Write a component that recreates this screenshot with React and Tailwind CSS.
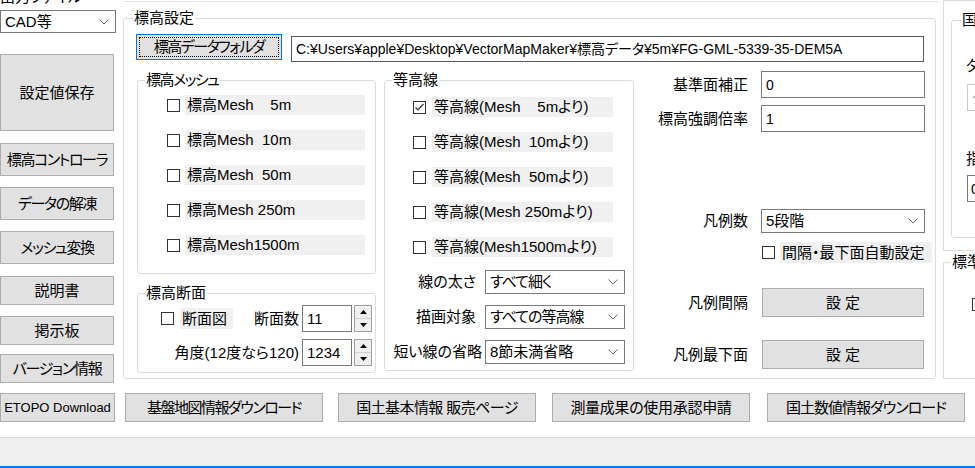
import React from "react";

const Chevron = () => (
  <svg width="10" height="6" viewBox="0 0 10 6" className="shrink-0">
    <polyline points="0.5,0.5 5,5 9.5,0.5" fill="none" stroke="#6d6d6d" strokeWidth="1" />
  </svg>
);

function Btn({ className = "", children }) {
  return (
    <div className={"flex shrink-0 items-center justify-center whitespace-nowrap border border-[#adadad] bg-[#e1e1e1] leading-[20px] " + className}>
      {children}
    </div>
  );
}

function Box({ checked }) {
  return (
    <div className="flex h-[13px] w-[13px] shrink-0 items-center justify-center border border-[#333333] bg-white">
      {checked && (
        <svg width="11" height="11" viewBox="0 0 11 11">
          <polyline points="1.5,5.5 4,8 9.5,2" fill="none" stroke="#333333" strokeWidth="1.2" />
        </svg>
      )}
    </div>
  );
}

function Combo({ className = "", value, valueClass = "" }) {
  return (
    <div className={"flex shrink-0 items-center border border-[#7a7a7a] bg-white pl-[4px] pr-[6px] leading-[20px] " + className}>
      <span className={"flex-1 whitespace-nowrap " + valueClass}>{value}</span>
      <Chevron />
    </div>
  );
}

function Input({ className = "", value }) {
  return (
    <div className={"flex shrink-0 items-center border border-[#7a7a7a] bg-white pl-[4px] leading-[20px] " + className}>
      <span className="whitespace-nowrap">{value}</span>
    </div>
  );
}

function Group({ title, className = "", titleClass = "left-[7px]", children }) {
  return (
    <div className={"relative shrink-0 rounded-[3px] border border-[#dcdcdc] " + className}>
      <span className={"absolute top-[-11px] whitespace-nowrap bg-white px-[1px] leading-[20px] " + titleClass}>{title}</span>
      {children}
    </div>
  );
}

function CheckRow({ checked = false, label, labelClass = "" }) {
  return (
    <div className="flex items-center">
      <Box checked={checked} />
      <div className={"whitespace-pre bg-[#f0f0f0] pl-[2px] leading-[20px] " + labelClass}>{label}</div>
    </div>
  );
}

function Spin() {
  return (
    <div className="ml-[2px] flex h-[27px] w-[18px] shrink-0 flex-col border border-[#a0a0a0] bg-[#f0f0f0]">
      <div className="flex flex-1 items-center justify-center border-b border-[#d0d0d0]">
        <svg width="7" height="4" viewBox="0 0 7 4"><polygon points="0,4 3.5,0 7,4" fill="#000" /></svg>
      </div>
      <div className="flex flex-1 items-center justify-center">
        <svg width="7" height="4" viewBox="0 0 7 4"><polygon points="0,0 3.5,4 7,0" fill="#000" /></svg>
      </div>
    </div>
  );
}

export default function App() {
  return (
    <div className="flex h-[468px] w-[975px] flex-col overflow-hidden bg-white text-[15px] text-black font-['Liberation_Sans','Noto_Sans_CJK_JP',sans-serif] [font-feature-settings:'palt']">
      <div className="flex h-[383px] shrink-0">
        {/* left column */}
        <div className="flex w-[123px] shrink-0 flex-col">
          <div className="flex h-[11px] flex-col justify-end overflow-hidden">
            <div className="mb-[3px] whitespace-nowrap leading-[20px]">出力ファイル</div>
          </div>
          <Combo className="h-[23px] w-[116px]" value="CAD等" />
          <Btn className="mt-[21px] h-[77px] w-[114px]">設定値保存</Btn>
          <Btn className="mt-[12px] h-[33px] w-[114px] tracking-[-1.4px]">標高コントローラ</Btn>
          <Btn className="mt-[11px] h-[33px] w-[114px] tracking-[-1.4px]">データの解凍</Btn>
          <Btn className="mt-[11px] h-[33px] w-[114px] tracking-[-1.4px]">メッシュ変換</Btn>
          <Btn className="mt-[12px] h-[29px] w-[114px]">説明書</Btn>
          <Btn className="mt-[11px] h-[29px] w-[114px]">掲示板</Btn>
          <Btn className="mt-[9px] h-[29px] w-[114px] tracking-[-1.3px]">バージョン情報</Btn>
        </div>

        {/* main */}
        <div className="flex w-[820px] shrink-0 flex-col">
          <div className="h-[2px] w-[815px] border-b border-[#e3e3e3]" />
          <Group title="標高設定" titleClass="left-[9px]" className="mt-[16px] h-[361px] w-[813px] pl-[12px] pt-[15px]">
            <div className="flex items-start">
              <div className="flex h-[26px] w-[146px] shrink-0 border border-[#0078d7] bg-[#e1e1e1]">
                <div className="m-[2px] flex flex-1 items-center justify-center whitespace-nowrap border border-dotted border-black leading-[20px] tracking-[-1.5px]">
                  標高データフォルダ
                </div>
              </div>
              <div className="ml-[9px] mt-[2px] flex h-[26px] w-[633px] shrink-0 items-center border border-[#5a5a5a] bg-white pl-[4px] text-[14px] leading-[20px]">
                <span className="whitespace-nowrap">C:¥Users¥apple¥Desktop¥VectorMapMaker¥標高データ¥5m¥FG-GML-5339-35-DEM5A</span>
              </div>
            </div>

            <div className="mt-[9px] flex items-start">
              {/* col1 */}
              <div className="ml-[1px] mt-[9px] flex shrink-0 flex-col">
                <Group title={<span className="tracking-[-1.5px]">標高メッシュ</span>} className="h-[194px] w-[239px] pl-[29px] pt-[14px]">
                  <div className="flex flex-col gap-[15px]">
                    <CheckRow label="標高Mesh    5m" labelClass="ml-[5px] h-[20px] w-[180px]" />
                    <CheckRow label="標高Mesh  10m" labelClass="ml-[5px] h-[20px] w-[180px]" />
                    <CheckRow label="標高Mesh  50m" labelClass="ml-[5px] h-[20px] w-[180px]" />
                    <CheckRow label="標高Mesh 250m" labelClass="ml-[5px] h-[20px] w-[180px]" />
                    <CheckRow label="標高Mesh1500m" labelClass="ml-[5px] h-[20px] w-[180px]" />
                  </div>
                </Group>
                <Group title="標高断面" className="mt-[19px] h-[80px] w-[239px] pr-[3px] pt-[11px]">
                  <div className="flex h-[27px] items-center">
                    <div className="ml-[23px] mr-auto flex items-center">
                      <Box />
                      <div className="ml-[6px] h-[21px] w-[53px] bg-[#f0f0f0] pl-[2px] leading-[21px]">断面図</div>
                    </div>
                    <span className="mr-[3px] whitespace-nowrap leading-[20px]">断面数</span>
                    <Input className="h-[27px] w-[50px]" value="11" />
                    <Spin />
                  </div>
                  <div className="mt-[7px] flex h-[27px] items-center justify-end">
                    <span className="mr-[3px] whitespace-nowrap leading-[20px]">角度(12度なら120)</span>
                    <Input className="h-[27px] w-[50px]" value="1234" />
                    <Spin />
                  </div>
                </Group>
              </div>

              {/* col2 */}
              <Group title="等高線" className="ml-[8px] mt-[9px] h-[291px] w-[250px] pl-[28px] pr-[8px] pt-[16px]">
                <div className="flex flex-col gap-[15px]">
                  <CheckRow checked label="等高線(Mesh    5mより)" labelClass="ml-[6px] h-[20px] w-[181px]" />
                  <CheckRow label="等高線(Mesh  10mより)" labelClass="ml-[6px] h-[20px] w-[181px]" />
                  <CheckRow label="等高線(Mesh  50mより)" labelClass="ml-[6px] h-[20px] w-[181px]" />
                  <CheckRow label="等高線(Mesh 250mより)" labelClass="ml-[6px] h-[20px] w-[181px]" />
                  <CheckRow label="等高線(Mesh1500mより)" labelClass="ml-[6px] h-[20px] w-[181px]" />
                </div>
                <div className="mt-[13px] flex flex-col gap-[11px]">
                  <div className="flex items-center justify-end">
                    <span className="mr-[9px] whitespace-nowrap leading-[20px]">線の太さ</span>
                    <Combo className="h-[24px] w-[140px]" valueClass="tracking-[-1px]" value="すべて細く" />
                  </div>
                  <div className="flex items-center justify-end">
                    <span className="mr-[9px] whitespace-nowrap leading-[20px]">描画対象</span>
                    <Combo className="h-[24px] w-[140px]" valueClass="tracking-[-1px]" value="すべての等高線" />
                  </div>
                  <div className="flex items-center justify-end">
                    <span className="mr-[3px] whitespace-nowrap leading-[20px]">短い線の省略</span>
                    <Combo className="h-[24px] w-[140px]" value="8節未満省略" />
                  </div>
                </div>
              </Group>

              {/* col3 */}
              <div className="ml-[6px] flex w-[292px] shrink-0 flex-col">
                <div className="flex items-center">
                  <span className="w-[108px] whitespace-nowrap text-right leading-[20px]">基準面補正</span>
                  <Input className="ml-[13px] h-[27px] w-[164px] text-[14px]" value="0" />
                </div>
                <div className="mt-[7px] flex items-center">
                  <span className="w-[108px] whitespace-nowrap text-right leading-[20px]">標高強調倍率</span>
                  <Input className="ml-[13px] h-[27px] w-[164px] text-[14px]" value="1" />
                </div>
                <div className="mt-[77px] flex items-center">
                  <span className="w-[108px] whitespace-nowrap text-right leading-[20px]">凡例数</span>
                  <Combo className="ml-[13px] h-[24px] w-[164px]" value="5段階" />
                </div>
                <div className="ml-[122px] mt-[9px] flex h-[21px] items-center">
                  <Box />
                  <div className="ml-[5px] h-[21px] w-[152px] whitespace-nowrap bg-[#f0f0f0] pl-[2px] leading-[21px]">間隔・最下面自動設定</div>
                </div>
                <div className="mt-[25px] flex items-center">
                  <span className="w-[108px] whitespace-nowrap text-right leading-[20px]">凡例間隔</span>
                  <Btn className="ml-[14px] h-[29px] w-[162px]">設 定</Btn>
                </div>
                <div className="mt-[23px] flex items-center">
                  <span className="w-[108px] whitespace-nowrap text-right leading-[20px]">凡例最下面</span>
                  <Btn className="ml-[14px] h-[29px] w-[162px]">設 定</Btn>
                </div>
              </div>
            </div>
          </Group>
        </div>

        {/* right (cut off) */}
        <div className="flex w-[200px] shrink-0 flex-col">
          <div className="h-[251px] border-b border-l border-t border-[#dcdcdc] pl-[7px] pt-[19px]">
            <Group title="国土数値情報" titleClass="left-[9px]" className="h-[218px] w-[190px] pl-[14px]">
              <div className="mt-[35px] whitespace-nowrap leading-[20px]">タイル種別</div>
              <div className="ml-[1px] mt-[8px] flex h-[27px] w-[150px] items-center border border-[#c8c8c8] bg-white pl-[4px] leading-[20px] text-[#9a9a9a]">
                タイル
              </div>
              <div className="mt-[38px] whitespace-nowrap leading-[20px]">指定ズーム</div>
              <div className="ml-[1px] mt-[6px] flex h-[27px] w-[150px] items-center border border-[#7a7a7a] bg-white pl-[3px] text-[14px] leading-[20px]">
                0
              </div>
            </Group>
          </div>
          <Group title="標準地図" titleClass="left-[7px]" className="mt-[11px] h-[117px] w-[200px] rounded-none border-r-0 pl-[28px] pt-[35px]">
            <Box />
          </Group>
        </div>
      </div>

      {/* bottom buttons */}
      <div className="mt-[10px] flex h-[29px] shrink-0">
        <Btn className="h-[29px] w-[115px] text-[13px]">ETOPO Download</Btn>
        <Btn className="ml-[10px] h-[29px] w-[198px] tracking-[-1.5px]">基盤地図情報ダウンロード</Btn>
        <Btn className="ml-[15px] h-[29px] w-[198px] tracking-[-0.6px]">国土基本情報 販売ページ</Btn>
        <Btn className="ml-[16px] h-[29px] w-[198px] tracking-[-0.3px]">測量成果の使用承認申請</Btn>
        <Btn className="ml-[17px] h-[29px] w-[198px] tracking-[-1px]">国土数値情報ダウンロード</Btn>
      </div>

      {/* status bar */}
      <div className="mt-[15px] h-[29px] shrink-0 border-t border-[#dadada] bg-[#f0f0f0]" />
      <div className="h-[2px] shrink-0 bg-[#0078d7]" />
    </div>
  );
}
